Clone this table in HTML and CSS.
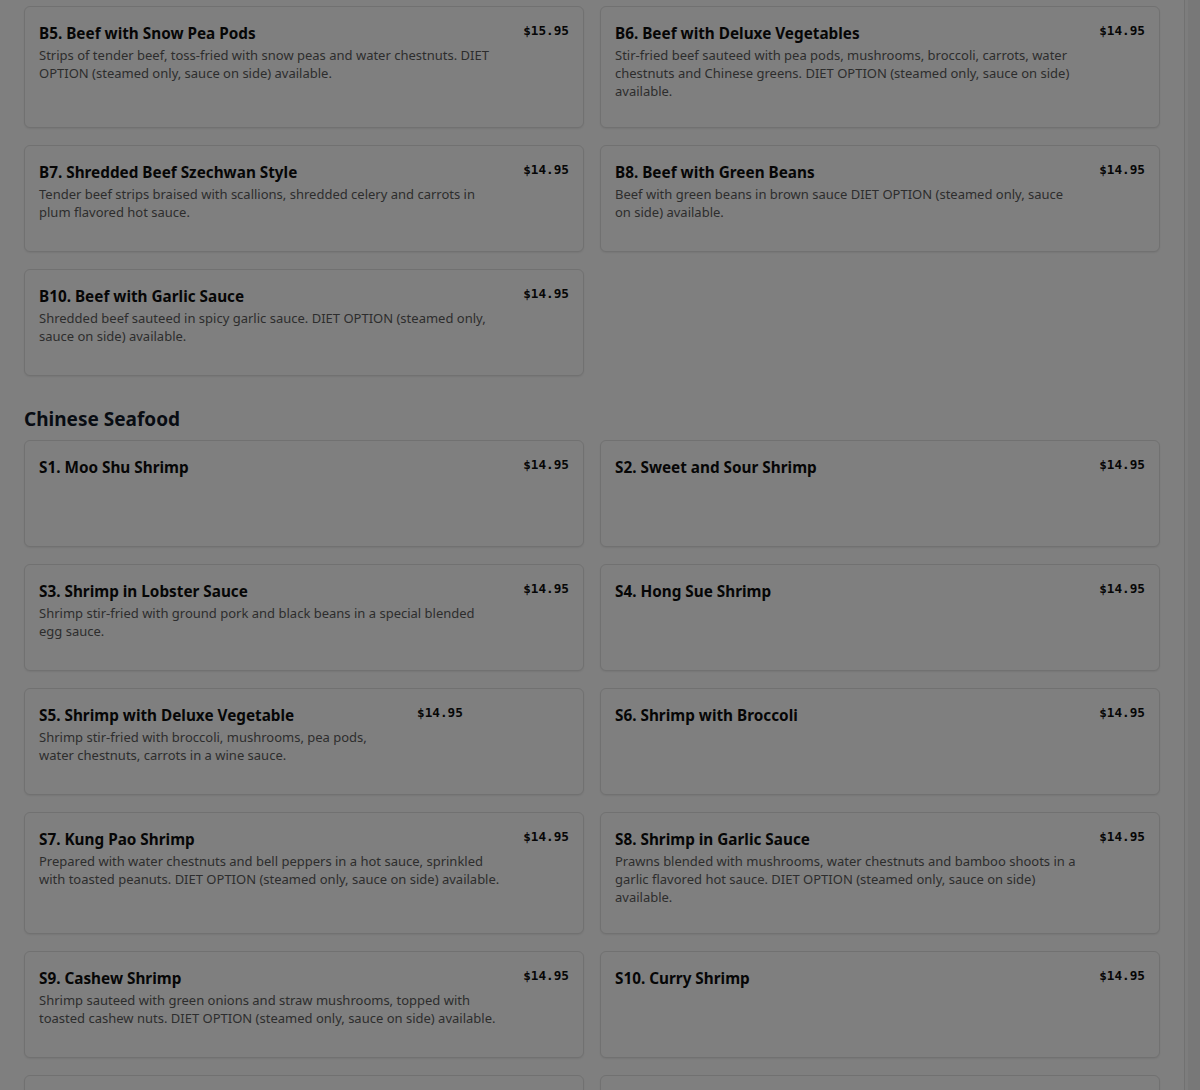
FILE: index.html
```html
<!DOCTYPE html>
<html lang="en">
<head>
    <meta charset="UTF-8">
    <meta name="viewport" content="width=device-width, initial-scale=1.0">
    <title>Menu</title>
    <link rel="stylesheet" href="styles.css">
</head>
<body>
    <div class="page">
        <main class="menu">
            <section class="category">
                <div class="items">
                    <div class="item">
                        <div class="info">
                            <h3>B5. Beef with Snow Pea Pods</h3>
                            <p>Strips of tender beef, toss-fried with snow peas and water chestnuts. DIET OPTION (steamed only, sauce on side) available.</p>
                        </div>
                        <span class="price">$15.95</span>
                    </div>
                    <div class="item">
                        <div class="info">
                            <h3>B6. Beef with Deluxe Vegetables</h3>
                            <p>Stir-fried beef sauteed with pea pods, mushrooms, broccoli, carrots, water chestnuts and Chinese greens. DIET OPTION (steamed only, sauce on side) available.</p>
                        </div>
                        <span class="price">$14.95</span>
                    </div>
                    <div class="item">
                        <div class="info">
                            <h3>B7. Shredded Beef Szechwan Style</h3>
                            <p>Tender beef strips braised with scallions, shredded celery and carrots in plum flavored hot sauce.</p>
                        </div>
                        <span class="price">$14.95</span>
                    </div>
                    <div class="item">
                        <div class="info">
                            <h3>B8. Beef with Green Beans</h3>
                            <p>Beef with green beans in brown sauce DIET OPTION (steamed only, sauce on side) available.</p>
                        </div>
                        <span class="price">$14.95</span>
                    </div>
                    <div class="item">
                        <div class="info">
                            <h3>B10. Beef with Garlic Sauce</h3>
                            <p>Shredded beef sauteed in spicy garlic sauce. DIET OPTION (steamed only, sauce on side) available.</p>
                        </div>
                        <span class="price">$14.95</span>
                    </div>
                </div>
            </section>

            <section class="category">
                <h2>Chinese Seafood</h2>
                <div class="items">
                    <div class="item">
                        <div class="info">
                            <h3>S1. Moo Shu Shrimp</h3>
                        </div>
                        <span class="price">$14.95</span>
                    </div>
                    <div class="item">
                        <div class="info">
                            <h3>S2. Sweet and Sour Shrimp</h3>
                        </div>
                        <span class="price">$14.95</span>
                    </div>
                    <div class="item">
                        <div class="info">
                            <h3>S3. Shrimp in Lobster Sauce</h3>
                            <p>Shrimp stir-fried with ground pork and black beans in a special blended egg sauce.</p>
                        </div>
                        <span class="price">$14.95</span>
                    </div>
                    <div class="item">
                        <div class="info">
                            <h3>S4. Hong Sue Shrimp</h3>
                        </div>
                        <span class="price">$14.95</span>
                    </div>
                    <div class="item">
                        <div class="info narrow">
                            <h3>S5. Shrimp with Deluxe Vegetable</h3>
                            <p>Shrimp stir-fried with broccoli, mushrooms, pea pods, water chestnuts, carrots in a wine sauce.</p>
                        </div>
                        <span class="price">$14.95</span>
                    </div>
                    <div class="item">
                        <div class="info">
                            <h3>S6. Shrimp with Broccoli</h3>
                        </div>
                        <span class="price">$14.95</span>
                    </div>
                    <div class="item">
                        <div class="info">
                            <h3>S7. Kung Pao Shrimp</h3>
                            <p>Prepared with water chestnuts and bell peppers in a hot sauce, sprinkled with toasted peanuts. DIET OPTION (steamed only, sauce on side) available.</p>
                        </div>
                        <span class="price">$14.95</span>
                    </div>
                    <div class="item">
                        <div class="info">
                            <h3>S8. Shrimp in Garlic Sauce</h3>
                            <p>Prawns blended with mushrooms, water chestnuts and bamboo shoots in a garlic flavored hot sauce. DIET OPTION (steamed only, sauce on side) available.</p>
                        </div>
                        <span class="price">$14.95</span>
                    </div>
                    <div class="item">
                        <div class="info">
                            <h3>S9. Cashew Shrimp</h3>
                            <p>Shrimp sauteed with green onions and straw mushrooms, topped with toasted cashew nuts. DIET OPTION (steamed only, sauce on side) available.</p>
                        </div>
                        <span class="price">$14.95</span>
                    </div>
                    <div class="item">
                        <div class="info">
                            <h3>S10. Curry Shrimp</h3>
                        </div>
                        <span class="price">$14.95</span>
                    </div>
                    <div class="item">
                        <div class="info">
                            <h3>S11. Shrimp with Cashew Nuts</h3>
                        </div>
                        <span class="price">$14.95</span>
                    </div>
                    <div class="item">
                        <div class="info">
                            <h3>S12. Shrimp with Mixed Vegetables</h3>
                        </div>
                        <span class="price">$14.95</span>
                    </div>
                </div>
            </section>
        </main>
        <div class="track"></div>
    </div>
    <div class="backdrop"></div>
</body>
</html>
```

FILE: styles.css
```css
html, body {
    height: 100%;
    overflow: hidden;
}
body {
    font-family: "Noto Sans", "Open Sans", sans-serif;
    background-color: #ffffff;
    color: #111827;
    margin: 0;
}
.page {
    display: flex;
    height: 100%;
}
.menu {
    flex: 1;
    padding: 6px 24px 0;
}
.track {
    width: 15px;
    flex: none;
    background-color: #f1f1f1;
    border-left: 1px solid #e2e2e2;
    box-shadow: inset 3px 0 0 #fafafa;
}
.category + .category {
    margin-top: 29px;
}
.category h2 {
    font-size: 19px;
    font-weight: 700;
    line-height: 28px;
    margin: 0 0 7px;
}
.items {
    display: grid;
    grid-template-columns: 1fr 1fr;
    column-gap: 16px;
    row-gap: 17px;
}
.item {
    display: flex;
    align-items: flex-start;
    gap: 22.5px;
    min-height: 107px;
    box-sizing: border-box;
    padding: 14px 14px 27px;
    background-color: #ffffff;
    border: 1px solid #e2e2e2;
    border-radius: 6px;
    box-shadow: 0 1px 2px rgba(0, 0, 0, 0.08);
}
.info {
    flex: 1;
}
.info.narrow {
    flex: none;
    width: 354px;
    margin-right: 1.5px;
}
.info h3 {
    font-size: 15.3px;
    font-weight: 700;
    line-height: 24px;
    margin: 0 0 1px;
    color: #0d0d0d;
}
.info p {
    font-size: 13px;
    line-height: 18px;
    color: #5b5b5b;
    margin: 0;
}
.price {
    font-family: "DejaVu Sans Mono", "Liberation Mono", monospace;
    font-size: 12.7px;
    font-weight: 700;
    line-height: 20px;
    color: #0d0d0d;
}
.backdrop {
    position: fixed;
    inset: 0;
    background-color: rgba(0, 0, 0, 0.5);
}
```
